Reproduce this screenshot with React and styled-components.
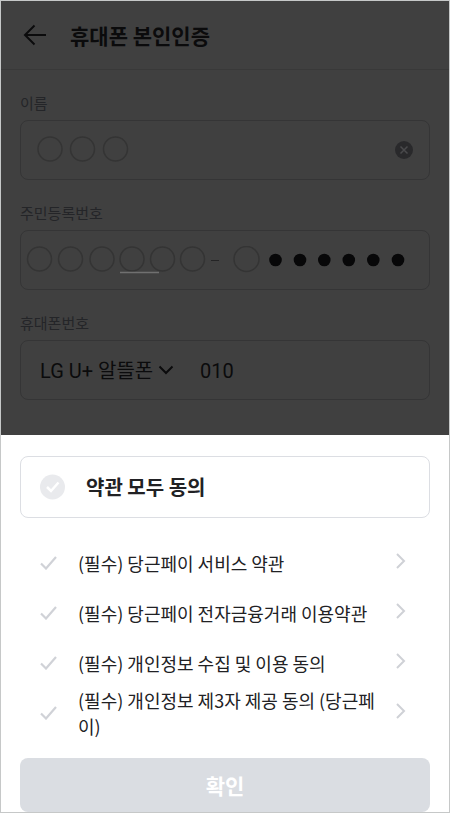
import React, { useState } from 'react';
import styled, { createGlobalStyle } from 'styled-components';


const TERMS = [
  { id: 'service', title: '(필수) 당근페이 서비스 약관' },
  { id: 'finance', title: '(필수) 당근페이 전자금융거래 이용약관' },
  { id: 'privacy', title: '(필수) 개인정보 수집 및 이용 동의' },
  { id: 'thirdParty', title: '(필수) 개인정보 제3자 제공 동의 (당근페이)' },
];

const FRONT_CIRCLES = [13.5, 44.5, 76, 106, 136.5, 166.5];
const BACK_DOTS = [6.5, 31, 55.3, 79.8, 104.3, 129];


export default function App() {
  const [agreed, setAgreed] = useState([]);
  const allAgreed = agreed.length === TERMS.length;

  const toggleAll = () => {
    setAgreed(allAgreed ? [] : TERMS.map((term) => term.id));
  };

  const toggleTerm = (id) => {
    setAgreed(agreed.includes(id) ? agreed.filter((item) => item !== id) : [...agreed, id]);
  };

  return (
    <>
      <GlobalStyle />
      <Screen>
        <Dimmed>
          <Header>
            <BackButton type="button" aria-label="뒤로">
              <svg width="24" height="22" viewBox="0 0 24 22">
                <path d="M23 11H2M11.5 1.5 2 11l9.5 9.5" />
              </svg>
            </BackButton>
            <Title>휴대폰 본인인증</Title>
          </Header>

          <Form>
            <Field>
              <Label htmlFor="name">이름</Label>
              <Box $left={16} $right={16}>
                <Mask width="94" height="28" viewBox="0 0 94 28">
                  <circle cx="13" cy="13" r="12" />
                  <circle cx="45.5" cy="13" r="12" />
                  <circle cx="78.5" cy="13" r="12" />
                </Mask>
                <CoverInput id="name" type="text" />
                <ClearButton type="button" aria-label="지우기">
                  <svg width="18" height="18" viewBox="0 0 18 18">
                    <circle cx="9" cy="9" r="9" />
                    <path d="m5.5 5.5 7 7m0-7-7 7" />
                  </svg>
                </ClearButton>
              </Box>
            </Field>

            <Field>
              <Label htmlFor="rrn">주민등록번호</Label>
              <Box $left={5} $right={16}>
                <Mask width="184" height="28" viewBox="0 0 184 28">
                  {FRONT_CIRCLES.map((x) => <circle key={x} cx={x} cy="13" r="12" />)}
                  <path d="M94 26.5h39" />
                </Mask>
                <Hyphen />
                <Mask width="28" height="28" viewBox="0 0 28 28">
                  <circle cx="13.5" cy="13" r="12.5" />
                </Mask>
                <Dots width="136" height="14" viewBox="0 0 136 14">
                  {BACK_DOTS.map((x) => <circle key={x} cx={x} cy="7" r="6.3" />)}
                </Dots>
                <CoverInput id="rrn" type="text" />
              </Box>
            </Field>

            <Field>
              <Label htmlFor="phone">휴대폰번호</Label>
              <Box $left={19} $right={16}>
                <Carrier>
                  <select aria-label="통신사" defaultValue="lgu">
                    <option value="lgu">LG U+ 알뜰폰</option>
                  </select>
                  <svg width="16" height="10" viewBox="0 0 16 10">
                    <path d="m1.5 1.5 6.5 6.5 6.5-6.5" />
                  </svg>
                </Carrier>
                <PhoneInput id="phone" type="tel" defaultValue="010" />
              </Box>
            </Field>
          </Form>
        </Dimmed>

        <Sheet>
          <AgreeAll>
            <HiddenCheck type="checkbox" checked={allAgreed} onChange={toggleAll} />
            <svg width="26" height="26" viewBox="0 0 26 26">
              <circle cx="12.5" cy="13" r="12.5" />
              <path d="m7 13 4 4 7.5-8.5" />
            </svg>
            약관 모두 동의
          </AgreeAll>

          <TermList>
            {TERMS.map((term) => (
              <TermRow key={term.id}>
                <TermLabel $on={agreed.includes(term.id)}>
                  <HiddenCheck
                    type="checkbox"
                    checked={agreed.includes(term.id)}
                    onChange={() => toggleTerm(term.id)}
                  />
                  <svg width="18" height="14" viewBox="0 0 18 14">
                    <path d="m1 7.5 5 5L16 1" />
                  </svg>
                  <span>{term.title}</span>
                </TermLabel>
                <TermLink href={`#${term.id}`} aria-label="약관 보기">
                  <svg width="10" height="16" viewBox="0 0 10 16">
                    <path d="m1 1 7 7-7 7" />
                  </svg>
                </TermLink>
              </TermRow>
            ))}
          </TermList>

          <Confirm type="button">확인</Confirm>
        </Sheet>
      </Screen>
    </>
  );
}


const GlobalStyle = createGlobalStyle`
  * {
    box-sizing: border-box;
  }

  body {
    margin: 0;
    background: #fff;
    font-family: 'Noto Sans CJK KR', sans-serif;
  }

  button, input, select {
    margin: 0;
    padding: 0;
    border: none;
    background: none;
    font: inherit;
    color: inherit;
  }

  svg {
    flex: none;
    display: block;
    fill: none;
  }
`;

const Screen = styled.main`
  display: flex;
  flex-direction: column;
  min-height: 100vh;
  border: 1px solid #c6c8c8;
  background: #fff;
`;

const Dimmed = styled.section`
  padding-bottom: 35px;
  background: #404040;
  color: #0b0b0c;
`;

const Header = styled.header`
  display: flex;
  align-items: center;
  gap: 23px;
  height: 69px;
  padding: 0 22px;
  border-bottom: 1px solid #393939;
`;

const BackButton = styled.button`
  display: flex;
  cursor: pointer;

  > svg {
    stroke: #0b0b0c;
    stroke-width: 2;
  }
`;

const Title = styled.h1`
  margin: 0;
  font-size: 21px;
  line-height: 30px;
  font-weight: 700;
`;

const Form = styled.form`
  display: flex;
  flex-direction: column;
  gap: 23px;
  padding: 23px 19px 0;
`;

const Field = styled.div`
  display: flex;
  flex-direction: column;
  gap: 7px;
`;

const Label = styled.label`
  font-size: 15px;
  line-height: 20px;
  color: #242528;
`;

const Box = styled.div`
  position: relative;
  display: flex;
  align-items: center;
  height: 60px;
  padding: 0 ${(props) => props.$right}px 0 ${(props) => props.$left}px;
  border: 1px solid #353536;
  border-radius: 8px;
`;

const Mask = styled.svg`
  stroke: #343434;
  stroke-width: 1.5;

  > path {
    stroke: #707070;
  }
`;

const Dots = styled.svg`
  margin-left: 8px;

  > circle {
    fill: #070708;
  }
`;

const Hyphen = styled.span`
  width: 8px;
  height: 1px;
  margin: 0 14px 0 1px;
  background: #242425;
`;

// 가려진 값 위에 겹쳐지는 입력창
const CoverInput = styled.input`
  position: absolute;
  inset: 0;
  width: 100%;
  font-size: 20px;
  outline: none;
`;

const ClearButton = styled.button`
  position: relative;
  margin-left: auto;
  cursor: pointer;

  circle {
    fill: #29292b;
  }

  path {
    stroke: #4a4a4c;
    stroke-width: 1.5;
  }
`;

const Carrier = styled.div`
  display: flex;
  align-items: center;
  gap: 4px;
  font-family: Roboto, 'Noto Sans CJK KR', sans-serif;
  font-size: 20px;

  > select {
    appearance: none;
    padding-top: 2px;
    line-height: 30px;
    outline: none;
  }

  > svg {
    stroke: #0b0b0c;
    stroke-width: 2;
  }
`;

const PhoneInput = styled.input`
  flex: 1;
  min-width: 0;
  margin-left: 26px;
  padding-top: 2px;
  font-family: Roboto, 'Noto Sans CJK KR', sans-serif;
  font-size: 20px;
  line-height: 30px;
  outline: none;
`;

const Sheet = styled.section`
  display: flex;
  flex-direction: column;
  gap: 20px;
  padding: 21px 19px 0;
  color: #212124;
`;

const AgreeAll = styled.label`
  position: relative;
  display: flex;
  align-items: center;
  gap: 20px;
  height: 62px;
  padding: 0 19px;
  border: 1px solid #dcdee3;
  border-radius: 8px;
  font-size: 20px;
  line-height: 30px;
  font-weight: 700;
  cursor: pointer;

  > svg {
    stroke: #fff;
    stroke-width: 2.5;
  }

  circle {
    fill: #e9eaed;
    stroke: none;
  }
`;

const HiddenCheck = styled.input`
  position: absolute;
  opacity: 0;
`;

const TermList = styled.ul`
  margin: 0;
  padding: 0;
  list-style: none;
`;

const TermRow = styled.li`
  display: flex;
  align-items: center;
  justify-content: space-between;
  height: 50px;
  padding: 0 24px 0 20px;
`;

const TermLabel = styled.label`
  position: relative;
  display: flex;
  align-items: center;
  gap: 20px;
  max-width: 344px;
  font-size: 18px;
  line-height: 26px;
  cursor: pointer;

  > svg {
    stroke: ${(props) => (props.$on ? '#ff6f0f' : '#d0d2d7')};
    stroke-width: 2.2;
  }
`;

const TermLink = styled.a`
  padding-bottom: 4px;

  > svg {
    stroke: #cfd1d6;
    stroke-width: 2;
  }
`;

const Confirm = styled.button`
  height: 54px;
  border-radius: 8px;
  background: #dadde2;
  color: #fff;
  font-size: 21px;
  line-height: 30px;
  font-weight: 700;
  cursor: pointer;
`;
